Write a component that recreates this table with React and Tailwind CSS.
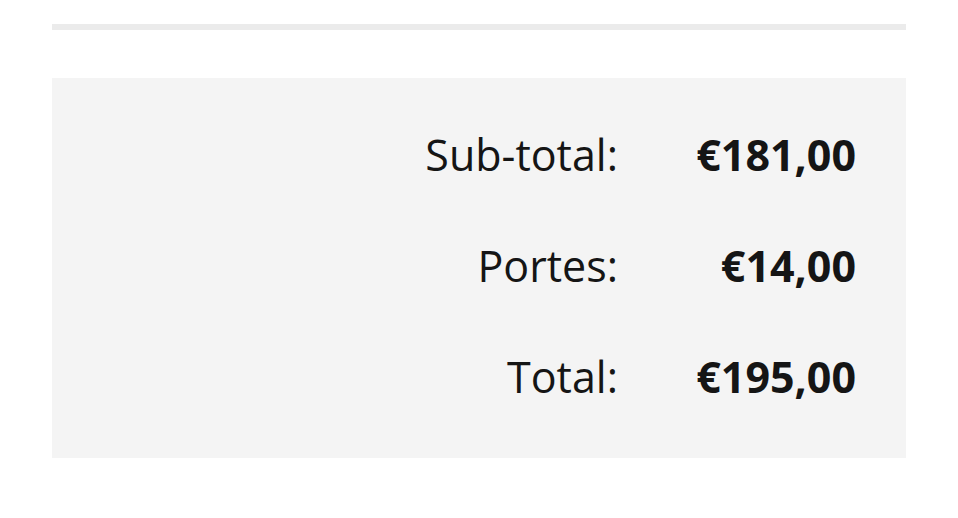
export default function App() {
  const rows = [
    ["Sub-total:", "€181,00"],
    ["Portes:", "€14,00"],
    ["Total:", "€195,00"],
  ];
  return (
    <div className="w-[958px] h-[518px] bg-white px-[52px] pt-[24px]" style={{ fontFamily: '"Open Sans", sans-serif' }}>
      <div className="h-[6px] bg-[#ebebeb]" />
      <div className="mt-[48px] h-[380px] bg-[#f4f4f4] flex flex-col pt-[48px] pr-[50px] gap-[53px] text-[#151515]">
        {rows.map(([l, v]) => (
          <div key={l} className="flex justify-end items-baseline text-[43px] leading-[58px]">
            <span className="font-normal">{l}</span>
            <span className="w-[238px] text-right font-bold">{v}</span>
          </div>
        ))}
      </div>
    </div>
  );
}
